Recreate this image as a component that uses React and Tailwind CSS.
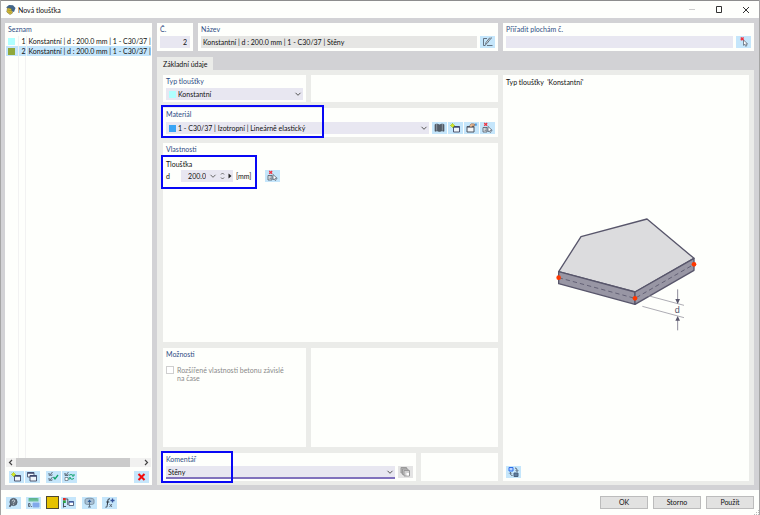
import React, { useState } from 'react'

const rows = [
  { id: 1, swatch: 'bg-[#b0ffff]', name: 'Konstantní | d : 200.0 mm | 1 - C30/37 | Stěny' },
  { id: 2, swatch: 'bg-[#8fa83c]', name: 'Konstantní | d : 200.0 mm | 1 - C30/37 | Stěny' },
]

function Icon({ children }) {
  return (
    <svg viewBox="0 0 15 12" className="block h-3 w-[15px]" fill="none" stroke="#4b5563" strokeWidth="1" aria-hidden="true">
      {children}
    </svg>
  )
}

const RenameIcon = () => (
  <Icon>
    <path d="M7 2.500H3.500v7H5.500M7 9.500h5.500" strokeWidth=".8" />
    <path d="M5.500 8.500l.5-2L9.500 2l1 .8-3.500 4.700z" fill="#dfe9f0" strokeWidth=".8" />
    <path d="M10.500 2h1.500" strokeWidth=".8" />
  </Icon>
)

const BookIcon = () => (
  <Icon>
    <path d="M3 2.500l2-.5 2.300.8v6.700L5 8.800l-2 .5zM12 2.500L10 2l-2.300.800v6.700L10 8.800l2 .5z" fill="#56606b" stroke="#434b55" strokeWidth=".6" />
    <path d="M4.600 2v6.500M10.400 2v6.500" stroke="#aab6c0" strokeWidth=".6" />
  </Icon>
)

const NewIcon = () => (
  <Icon>
    <path d="M5.500 4.500h6V10h-6z" fill="#eef4fa" stroke="#3f4763" strokeWidth=".9" />
    <path d="M5.500 5h6" stroke="#39446e" strokeWidth="1.400" />
    <path d="M4.500 1v5M2 3.500h5M2.800 1.800l3.400 3.400M6.200 1.800L2.800 5.200" stroke="#9ccb1d" strokeWidth=".8" />
    <circle cx="4.500" cy="3.500" r="1.200" fill="#e4e51f" stroke="none" />
  </Icon>
)

const CopyIcon = () => (
  <Icon>
    <path d="M2.500 1.500H9V6H2.500z" fill="#eef4fa" stroke="#535a70" strokeWidth=".9" />
    <path d="M5 4.500h6.500V10H5z" fill="#eef4fa" stroke="#3f4763" strokeWidth=".9" />
    <path d="M5 5h6.500M2.500 2H9" stroke="#39446e" strokeWidth="1.300" />
  </Icon>
)

const EditIcon = () => (
  <Icon>
    <path d="M3 4.500h7V10H3z" fill="#f3f5f7" />
    <path d="M3 4.800h7" strokeWidth="1.600" />
    <path d="M5.500 3.500l2-1.700 3 .2v1.800l-2.300.2-1 1.500" fill="#efbd94" stroke="#8a6550" strokeWidth=".7" />
    <path d="M11 1.500h1.800v2.300H11z" fill="#4d9ae0" stroke="none" />
  </Icon>
)

const PickIcon = () => (
  <Icon>
    <path d="M3 5.500h4V10H3z" fill="#e9eef2" strokeWidth=".8" />
    <path d="M4.500 7h2M4.500 8.500h2" strokeWidth=".6" />
    <path d="M8 4.500v5.300l1.200-1 1 1.700 1-.6-.9-1.600h1.900z" fill="#fff" strokeWidth=".7" />
    <path d="M4.200 1l3 2.800M7.200 1l-3 2.800" stroke="#ef3340" strokeWidth="1.200" />
  </Icon>
)

const CursorIcon = () => (
  <Icon>
    <path d="M7.500 4v5.300l1.200-1 1 2 1.100-.6-1-1.800h1.800z" fill="#fff" strokeWidth=".7" />
    <path d="M4.800 1.500l2.800 2.800M7.600 1.500L4.800 4.300" stroke="#ef3340" strokeWidth="1.500" />
  </Icon>
)

const CheckAllIcon = () => (
  <Icon>
    <path d="M3 2.500l1.200 1.300L6.500 1M3 7.500l1.200 1.300L6.500 6" strokeWidth=".9" />
    <path d="M3 2v2.500h3V3M3 7v2.500h3V8" strokeWidth=".6" />
    <path d="M7.500 6l1.500 2 3-4" stroke="#12a36b" strokeWidth="1.300" />
  </Icon>
)

const ToggleIcon = () => (
  <Icon>
    <path d="M3 2.500l1.200 1.300L6.500 1M3 2v2.500h3V3" strokeWidth=".8" />
    <path d="M3 6.500h3v3H3z" fill="#fff" strokeWidth=".6" />
    <path d="M7 4.500c1-1.200 3-1.200 4 0M12 3v2h-2M12 7.200c-1 1.300-3 1.300-4 0M7 8.800v-2h2" stroke="#12a36b" strokeWidth="1" />
  </Icon>
)

const DeleteIcon = () => (
  <Icon>
    <path d="M4.500 3l6 6M10.500 3l-6 6" stroke="#f20d0d" strokeWidth="2" />
  </Icon>
)

const LayersIcon = () => (
  <Icon>
    <path d="M3 1.500h5.500V7H3z" fill="#b5b5b5" stroke="#999" />
    <path d="M4.500 3H10v5.500H4.500z" fill="#c4c4c4" stroke="#999" />
    <path d="M6 4.500h5.500V10H6z" fill="#d2d2d2" stroke="#999" />
    <path d="M8.500 7h2.500v2.500H8.500z" fill="#fff" stroke="none" />
  </Icon>
)

const HelpIcon = () => (
  <Icon>
    <circle cx="7.500" cy="5" r="3.600" fill="#65717d" stroke="#465260" strokeWidth=".8" />
    <path d="M5 7.500L3.500 9.700" strokeWidth="1.600" />
    <path d="M6.300 4.200c0-1.800 2.600-1.500 2.400 0-.1.700-1.200.800-1.200 1.600M7.500 6.800v.8" stroke="#e5edf4" strokeWidth=".8" />
  </Icon>
)

const UnitsIcon = () => (
  <Icon>
    <path d="M2.500 1h10v3.500h-10z" fill="#6cc09b" stroke="none" />
    <path d="M4 1v1.500M6 1v1.500M8 1v1.500M10 1v1.500" stroke="#3f9470" strokeWidth=".6" />
    <path d="M2.500 6.500H4v3H2.500zM5.500 9v1" strokeWidth=".8" />
    <path d="M7 6h6v4H7z" fill="#9cc0f3" stroke="none" />
    <path d="M7 6h6v4H7zM9 6v4M11 6v4M7 8h6" stroke="#6a96e4" strokeWidth=".6" />
  </Icon>
)

const TreeIcon = () => (
  <Icon>
    <path d="M2 1h2.800v2.500H2z" fill="#e22b25" stroke="none" />
    <path d="M2 3.500h2.800V6H2z" fill="#27a348" stroke="none" />
    <path d="M2.500 6v4.500M3 9.500h2M4.800 2h2v6" strokeWidth="1" />
    <path d="M8 4.500h4.500v4H8z" fill="#fff" stroke="#3f4763" strokeWidth=".8" />
    <path d="M8 5h4.500" stroke="#2e51ac" strokeWidth="1.200" />
  </Icon>
)

const ViewIcon = () => (
  <Icon>
    <path d="M3 2.500c1-1 2.500-1.300 4.500-1.300s3.500.3 4.500 1.300v4c-1 .8-2 1-2.500 1h-4c-.5 0-1.500-.2-2.500-1z" fill="#a8c1d6" stroke="#718697" strokeWidth=".8" />
    <path d="M7.500 4v6M6 10h3" stroke="#5f7386" />
    <path d="M5.500 5l2-2.500 2 2.500z" fill="#315f9a" stroke="none" />
  </Icon>
)

const FormulaIcon = () => (
  <Icon>
    <path d="M8 2c-1.500-.7-2 .2-2.200 2L5.200 8.500C5 10 4.500 10.500 3.500 10.200M4.300 5h3" stroke="#2b3440" strokeWidth="1" />
    <path d="M7.500 7l2.500 3M10 7l-2.500 3" strokeWidth=".8" />
    <path d="M8.500 3.500h4M10.500 1.500v4" stroke="#36539a" strokeWidth="1.300" />
  </Icon>
)

const SwapIcon = () => (
  <Icon>
    <path d="M3 1.500h4V5H3z" fill="#b9d5ff" stroke="#2c6cea" />
    <path d="M8 7h4v3.500H8z" fill="#5e7d9f" stroke="#48617c" />
    <path d="M9 2c2 0 2 1.500 2 3.300M9.800 4.300L11 5.500l1.200-1.200M6.500 9.500c-2 0-2-1.200-2-2.800M3.300 7.500l1.200-1.200 1.200 1.200" strokeWidth=".9" />
  </Icon>
)

function IconButton({ label, disabled, children }) {
  return (
    <button
      type="button"
      aria-label={label}
      title={label}
      disabled={disabled}
      className="h-3 w-[15px] shrink-0 bg-[#c5e6fb] disabled:bg-[#e4e4e4]"
    >
      {children}
    </button>
  )
}

function Chevron() {
  return (
    <svg viewBox="0 0 8 8" className="pointer-events-none absolute top-0.5 right-px size-2" fill="none" stroke="#555" aria-hidden="true">
      <path d="M1.500 2.800L4 5.300l2.500-2.500" />
    </svg>
  )
}

// Blue frame over the fields that the manual points at
function Highlight({ className }) {
  return <div className={`pointer-events-none absolute border-2 border-[#0808f5] ${className}`} />
}

function Card({ className = '', children }) {
  return <div className={`relative bg-[#fefffc] px-[3px] pt-px ${className}`}>{children}</div>
}

const labelClass = 'block h-3 leading-[11px] text-[#2f4d85]'

function PlateDrawing() {
  return (
    <svg viewBox="-10 21 510 390" className="w-[170px]" stroke="#58566b" strokeWidth="4" strokeLinejoin="round" role="img" aria-label="Deska konstantní tloušťky">
      <path d="M43 200L110 95l198-53 141 118-177 101z" fill="#dcdcde" />
      <path d="M43 200l229 61v37L43 236z" fill="#9896a4" />
      <path d="M272 261l177-101v36L272 298z" fill="#9896a4" />
      <path d="M43 218l229 62 177-102" fill="none" strokeWidth="2.500" strokeDasharray="13 9" />
      <path d="M296 268l123 33M294 304l125 34" fill="none" stroke="#9c9ba5" strokeWidth="2.500" />
      <path d="M400 253v40M400 338v38" fill="none" stroke="#777587" strokeWidth="2.500" />
      <path d="M393 282h14l-7 15zM393 347h14l-7-14z" fill="#58566b" stroke="none" />
      <g fill="#ff3800" stroke="none">
        <circle cx="43" cy="218" r="7" />
        <circle cx="272" cy="280" r="7" />
        <circle cx="449" cy="178" r="7" />
      </g>
      <text x="391" y="325" fontSize="27" fontFamily="Liberation Sans, sans-serif" fill="#58566b" stroke="none">d</text>
    </svg>
  )
}

function ThicknessList({ selected, onSelect }) {
  return (
    <section className="flex w-[147px] shrink-0 flex-col bg-[#fefffc] pt-px pb-0.5">
      <h2 className={`${labelClass} pl-[3px]`}>Seznam</h2>
      <div className="flex flex-1 flex-col overflow-hidden px-px">
        <table className="w-full flex-none table-fixed border-collapse">
          <tbody>
            {rows.map((row) => (
              <tr
                key={row.id}
                onClick={() => onSelect(row.id)}
                className={`h-[10px] leading-[10px] ${selected === row.id ? 'bg-[#c3e5fb]' : ''}`}
              >
                <td className="w-3 py-0 pl-0.5">
                  <div className={`h-[7px] w-[7px] ${row.swatch}`} />
                </td>
                <td className="w-2 border-x border-[#f2f2f2] p-0 text-right">{row.id}</td>
                <td className="overflow-hidden py-0 pl-0.5 whitespace-nowrap">{row.name}</td>
              </tr>
            ))}
          </tbody>
        </table>
        <div className="ml-3 w-2 flex-1 border-x border-[#f2f2f2]" />
      </div>
      <div className="mx-px flex h-[9px] items-center bg-[#f1f1f0]">
        <svg viewBox="0 0 10 9" className="w-[10px]" fill="none" stroke="#444" strokeWidth="1.200"><path d="M6 2L3.500 4.500 6 7" /></svg>
        <div className="h-full flex-1 bg-[#cbcbcb]" />
        <svg viewBox="0 0 21 9" className="w-[21px]" fill="none" stroke="#444" strokeWidth="1.200"><path d="M15 2l2.500 2.500L15 7" /></svg>
      </div>
      <div className="mt-1 flex gap-px pr-[3px] pl-1">
        <IconButton label="Nový"><NewIcon /></IconButton>
        <IconButton label="Kopírovat"><CopyIcon /></IconButton>
        <div className="w-1" />
        <IconButton label="Vybrat vše"><CheckAllIcon /></IconButton>
        <IconButton label="Obrátit výběr"><ToggleIcon /></IconButton>
        <div className="flex-1" />
        <IconButton label="Odstranit"><DeleteIcon /></IconButton>
      </div>
    </section>
  )
}

function Header({ selected }) {
  return (
    <div className="flex gap-[5px]">
      <Card className="w-9 pb-[3px]">
        <label htmlFor="no" className={labelClass}>Č.</label>
        <input id="no" readOnly value={selected} className="block h-3 w-full bg-[#e8e7f1] pr-[3px] text-right" />
      </Card>
      <Card className="flex-1 pb-[3px]">
        <label htmlFor="name" className={labelClass}>Název</label>
        <div className="flex gap-[3px]">
          <input id="name" readOnly value={rows[0].name} className="h-3 min-w-0 flex-1 bg-[#e6e6e4] px-0.5" />
          <IconButton label="Upravit název"><RenameIcon /></IconButton>
        </div>
      </Card>
      <Card className="w-[251px] pb-[3px]">
        <label htmlFor="assign" className={labelClass}>Přiřadit plochám č.</label>
        <div className="flex gap-[3px]">
          <input id="assign" className="h-3 min-w-0 flex-1 bg-[#e8e7f1] px-0.5" />
          <IconButton label="Vybrat plochy"><CursorIcon /></IconButton>
        </div>
      </Card>
    </div>
  )
}

function MainTab() {
  const [comment, setComment] = useState('Stěny')

  return (
    <div className="flex flex-1 gap-[5px] bg-[#ebece9] pt-[5px] pr-[5px] pb-1 pl-1.5">
      <div className="flex min-w-0 flex-1 flex-col gap-1.5">
        <div className="flex gap-[5px]">
          <Card className="w-[143px] pb-0.5">
            <label htmlFor="type" className={labelClass}>Typ tloušťky</label>
            <div className="relative">
              <span className="absolute top-[3px] left-[3px] size-[7px] bg-[#b0ffff]" />
              <select id="type" className="block h-3 w-full appearance-none bg-[#e8e7f1] pl-3">
                <option>Konstantní</option>
              </select>
              <Chevron />
            </div>
          </Card>
          <Card className="flex-1" />
        </div>

        <Card className="pb-[3px]">
          <label htmlFor="material" className={labelClass}>Materiál</label>
          <div className="mt-px flex gap-px">
            <div className="relative mr-0.5 flex-1">
              <span className="absolute top-[3px] left-[3px] size-[7px] bg-[#3aa5f5]" />
              <select id="material" className="block h-3 w-full appearance-none bg-[#e8e7f1] pl-3">
                <option>1 - C30/37 | Izotropní | Lineárně elastický</option>
              </select>
              <Chevron />
            </div>
            <IconButton label="Knihovna"><BookIcon /></IconButton>
            <IconButton label="Nový materiál"><NewIcon /></IconButton>
            <IconButton label="Upravit materiál"><EditIcon /></IconButton>
            <IconButton label="Vybrat materiál"><PickIcon /></IconButton>
          </div>
          <Highlight className="-top-[3px] -left-0.5 h-[33px] w-[163px]" />
        </Card>

        <Card className="grow-2 basis-0">
          <h2 className={labelClass}>Vlastnosti</h2>
          <h3 className="mt-0.5 h-3 leading-3">Tloušťka</h3>
          <div className="flex h-3 items-center">
            <label htmlFor="d" className="w-[15px]">d</label>
            <div className="flex h-3 w-[52px] items-center bg-[#e8e7f1]">
              <input id="d" defaultValue="200.0" className="h-3 w-[25px] text-right" />
              <svg viewBox="0 0 27 12" className="h-3 w-[27px]" fill="none" stroke="#666" aria-hidden="true">
                <path d="M4.500 4.800L7 7.300l2.500-2.500" />
                <path d="M15 4.500L16.500 3 18 4.500M15 7.500L16.500 9 18 7.500" />
                <path d="M22.500 3.500v5l3-2.500z" fill="#222" stroke="none" />
              </svg>
            </div>
            <span className="ml-[3px] w-[29px]">[mm]</span>
            <IconButton label="Vybrat tloušťku"><PickIcon /></IconButton>
          </div>
          <Highlight className="top-3 -left-0.5 h-[34px] w-24" />
        </Card>

        <div className="flex grow basis-0 gap-[5px]">
          <Card className="w-[143px]">
            <h2 className={labelClass}>Možnosti</h2>
            <label className="mt-[5px] flex gap-[3px] pr-3 leading-2 text-[#8a8a8a]">
              <input type="checkbox" disabled className="size-2 shrink-0 appearance-none border border-[#cfcfcf] bg-white" />
              <span>Rozšířené vlastnosti betonu závislé na čase</span>
            </label>
          </Card>
          <Card className="flex-1" />
        </div>

        <div className="flex gap-[5px]">
          <Card className="flex-1 pb-0.5">
            <label htmlFor="comment" className={labelClass}>Komentář</label>
            <div className="flex gap-[3px]">
              <div className="relative flex-1">
                <input
                  id="comment"
                  value={comment}
                  onChange={(e) => setComment(e.target.value)}
                  className="block h-[13px] w-full border-b-2 border-[#8172bd] bg-[#e8e7f1] px-0.5"
                />
                <Chevron />
              </div>
              <IconButton label="Převzít komentář" disabled><LayersIcon /></IconButton>
            </div>
            <Highlight className="-top-0.5 -left-0.5 h-8 w-[72px]" />
          </Card>
          <Card className="w-[77px]" />
        </div>
      </div>

      <Card className="flex w-[246px] flex-col pb-[3px]">
        <p className="h-3 leading-3 whitespace-pre">Typ tloušťky  'Konstantní'</p>
        <div className="flex flex-1 items-center justify-center">
          <PlateDrawing />
        </div>
        <IconButton label="Přepnout zobrazení"><SwapIcon /></IconButton>
      </Card>
    </div>
  )
}

function TitleBar() {
  return (
    <header className="flex h-[18px] items-center border-t border-[#8d8d8d] bg-[#fefffc] pr-[7px] pl-1">
      <svg viewBox="0 0 11 11" className="size-[11px]" aria-hidden="true">
        <path d="M1 3.500L4 1l4 .3L10.500 4 9 8 6 7 4 4.500z" fill="#42668a" />
        <path d="M2.500 4l3.500.5L7.500 9 5 10.500 1.800 8z" fill="#e5c72e" stroke="#6c6a3d" strokeWidth=".6" />
        <path d="M3 6l3 .5M3.500 8l2.700.3" stroke="#6c6a3d" strokeWidth=".6" />
      </svg>
      <h1 className="ml-0.5 flex-1">Nová tloušťka</h1>
      <div className="flex gap-[15px]">
        <button type="button" aria-label="Minimalizovat" disabled>
          <svg viewBox="0 0 12 12" className="size-3" stroke="#ccc"><path d="M3 5.500h6" /></svg>
        </button>
        <button type="button" aria-label="Maximalizovat">
          <svg viewBox="0 0 12 12" className="size-3" fill="none" stroke="#333"><path d="M3.500 2.500h5v6h-5z" /></svg>
        </button>
        <button type="button" aria-label="Zavřít">
          <svg viewBox="0 0 12 12" className="size-3" fill="none" stroke="#333"><path d="M3 3l6 6M9 3L3 9" /></svg>
        </button>
      </div>
    </header>
  )
}

function Footer() {
  return (
    <footer className="relative flex h-[25px] items-center bg-[#fefffc] px-[5px]">
      <IconButton label="Nápověda"><HelpIcon /></IconButton>
      <div className="ml-[5px] flex"><IconButton label="Jednotky"><UnitsIcon /></IconButton></div>
      <button type="button" aria-label="Barva" className="mr-0.5 ml-[5px] h-[13px] w-[13px] border border-[#4d4930] bg-[#e6c200]" />
      <IconButton label="Zobrazení"><TreeIcon /></IconButton>
      <div className="ml-1.5 flex gap-[5px]">
        <IconButton label="Pohled"><ViewIcon /></IconButton>
        <IconButton label="Vzorec"><FormulaIcon /></IconButton>
      </div>
      <div className="ml-auto flex gap-[5px]">
        {['OK', 'Storno', 'Použít'].map((text) => (
          <button key={text} type="button" className="h-[13px] w-12 border border-[#bcbcbc] bg-[#e2e2e1] leading-[11px]">
            {text}
          </button>
        ))}
      </div>
      {/* resize grip */}
      <svg viewBox="0 0 5 5" className="absolute right-0 bottom-0 size-[5px]" fill="#bbb" aria-hidden="true">
        <path d="M4 0h1v1H4zM2 2h1v1H2zM4 2h1v1H4zM0 4h1v1H0zM2 4h1v1H2zM4 4h1v1H4z" />
      </svg>
    </footer>
  )
}

function App() {
  const [selected, setSelected] = useState(2)

  return (
    <div className="flex min-h-screen flex-col border-x border-[#a5a5a5] bg-[#d2d2d5] font-['Lato','Noto_Sans',sans-serif] text-[7px] leading-3 text-[#111]">
      <TitleBar />
      <main className="flex flex-1 gap-[5px] py-[5px] pr-[5px] pl-1">
        <ThicknessList selected={selected} onSelect={setSelected} />
        <div className="flex min-w-0 flex-1 flex-col">
          <Header selected={selected} />
          <div className="mt-1.5 flex" role="tablist">
            <button type="button" role="tab" aria-selected="true" className="h-[13px] bg-[#ebece9] px-1.5">
              Základní údaje
            </button>
          </div>
          <MainTab />
        </div>
      </main>
      <Footer />
    </div>
  )
}

export default App
